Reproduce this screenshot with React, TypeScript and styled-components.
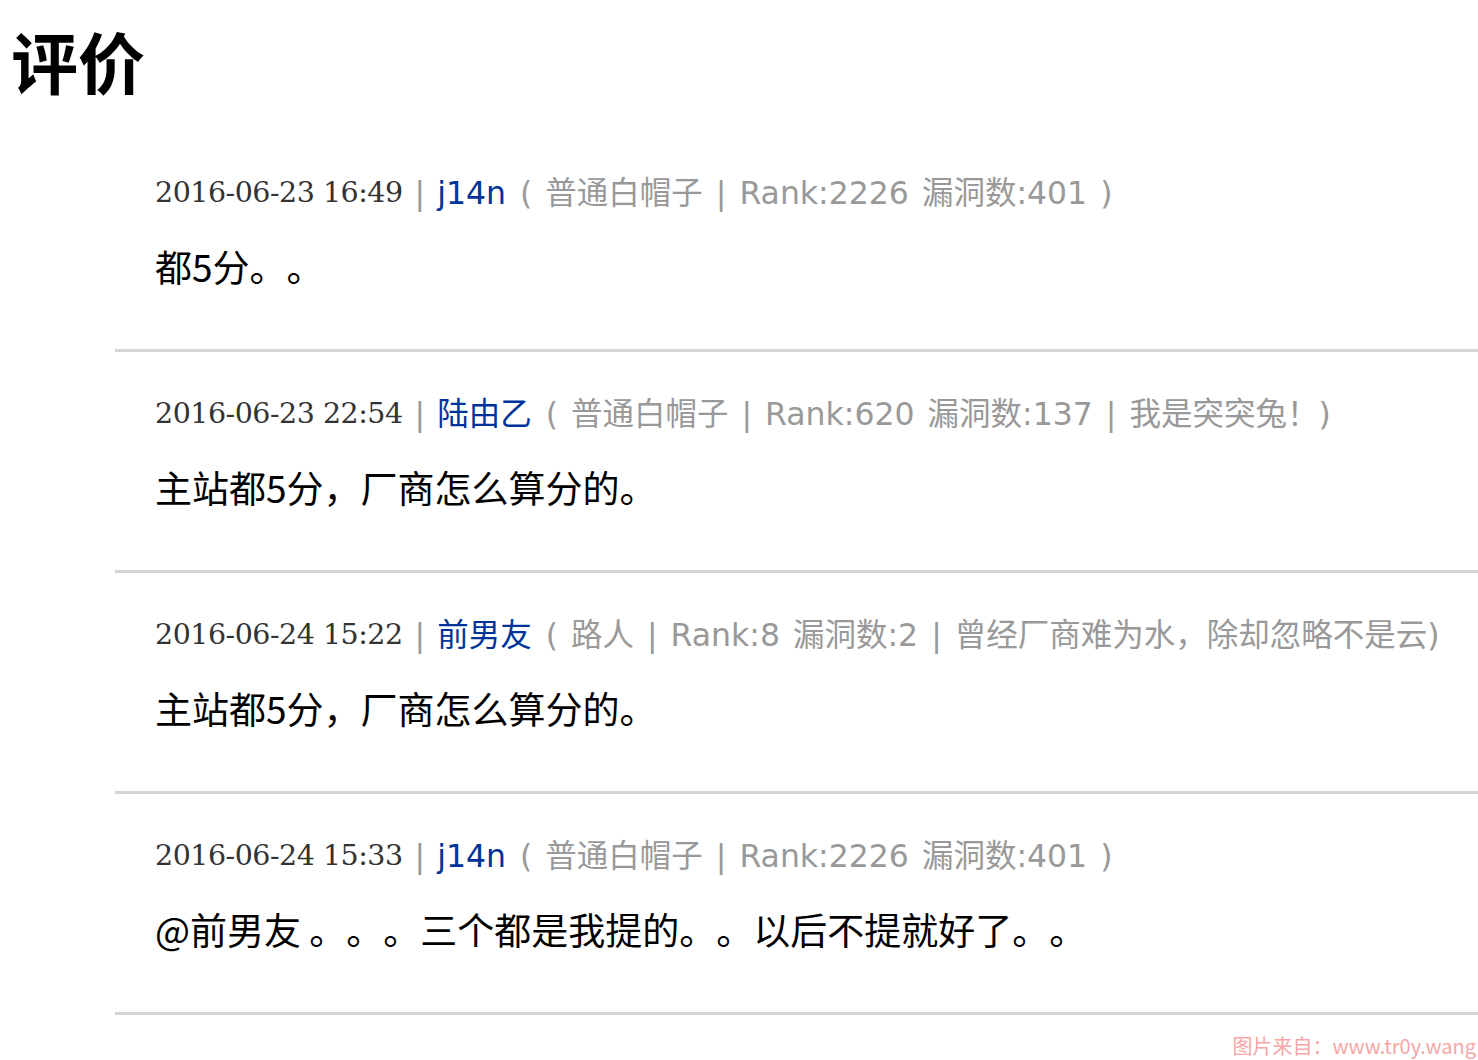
import React from "react";
import styled, { createGlobalStyle } from "styled-components";

const Global = createGlobalStyle`
  html, body { margin: 0; padding: 0; background: #fff; }
  body {
    font-family: "DejaVu Sans", "Noto Sans CJK SC", sans-serif;
    text-spacing-trim: space-all;
  }
`;

const Page = styled.div`
  position: relative;
  width: 1478px;
  min-height: 1060px;
  overflow: hidden;
`;

const Title = styled.h1`
  margin: 0;
  padding: 20px 0 0 11px;
  height: 131px;
  box-sizing: border-box;
  font-family: "Noto Sans CJK SC", sans-serif;
  font-size: 67px;
  line-height: 80px;
  font-weight: 700;
  color: #000;
`;

const List = styled.div`
  margin-left: 115px;
`;

const Item = styled.div`
  padding: 42px 0 63px 40px;
  border-bottom: 3px solid #d4d4d4;
`;

const Meta = styled.div`
  display: flex;
  align-items: center;
  height: 40px;
  line-height: 40px;
  font-size: 31.5px;
  color: #999;
  white-space: nowrap;
  word-spacing: 3px;
`;

const Date = styled.span`
  font-family: "DejaVu Serif", "Liberation Serif", serif;
  font-size: 28.5px;
  color: #333;
  letter-spacing: -0.5px;
  word-spacing: 0;
`;

const Sep = styled.span`
  color: #999;
  margin: 0 12px;
`;

const Name = styled.span`
  color: #003399;
`;

const Info = styled.span`
  color: #999;
  margin-left: 14px;
`;

const Body = styled.div`
  margin-top: 33px;
  height: 40px;
  line-height: 40px;
  font-family: "Noto Sans CJK SC", sans-serif;
  font-size: 37px;
  color: #000;
  white-space: nowrap;
`;

const Watermark = styled.div`
  position: absolute;
  right: 2px;
  bottom: 0;
  font-family: "Noto Sans CJK SC", sans-serif;
  font-size: 20px;
  color: #f6a6a6;
`;

type C = { date: string; name: string; info: string; text: string };

const comments: C[] = [
  { date: "2016-06-23 16:49", name: "j14n", info: "( 普通白帽子 | Rank:2226 漏洞数:401 )", text: "都5分。。" },
  { date: "2016-06-23 22:54", name: "陆由乙", info: "( 普通白帽子 | Rank:620 漏洞数:137 | 我是突突兔！)", text: "主站都5分，厂商怎么算分的。" },
  { date: "2016-06-24 15:22", name: "前男友", info: "( 路人 | Rank:8 漏洞数:2 | 曾经厂商难为水，除却忽略不是云)", text: "主站都5分，厂商怎么算分的。" },
  { date: "2016-06-24 15:33", name: "j14n", info: "( 普通白帽子 | Rank:2226 漏洞数:401 )", text: "@前男友 。。。三个都是我提的。。以后不提就好了。。" },
];

export default function App() {
  return (
    <Page>
      <Global />
      <Title>评价</Title>
      <List>
        {comments.map((c, i) => (
          <Item key={i}>
            <Meta>
              <Date>{c.date}</Date>
              <Sep>|</Sep>
              <Name>{c.name}</Name>
              <Info>{c.info}</Info>
            </Meta>
            <Body>{c.text}</Body>
          </Item>
        ))}
      </List>
      <Watermark>图片来自：www.tr0y.wang</Watermark>
    </Page>
  );
}
